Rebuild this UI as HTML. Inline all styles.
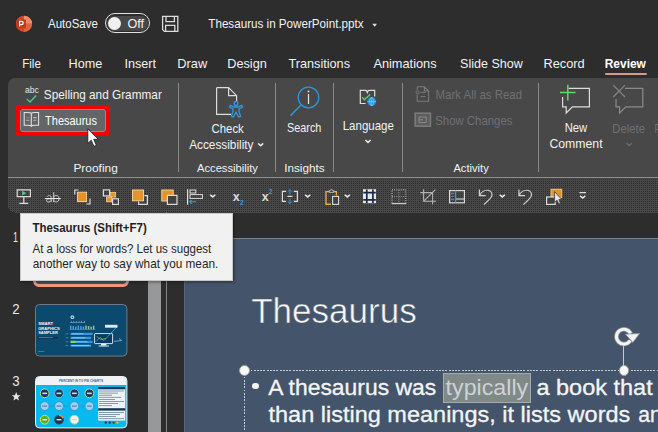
<!DOCTYPE html>
<html><head><meta charset="utf-8">
<style>
*{box-sizing:border-box;margin:0;padding:0}
html,body{width:658px;height:432px;overflow:hidden;background:#2d2d2d;font-family:"Liberation Sans",sans-serif}
.a{position:absolute;display:block}
.tx{overflow:visible}
text{font-family:"Liberation Sans",sans-serif;white-space:pre}
</style></head><body>
<svg class="a" style="left:14px;top:14px;" width="20" height="20" viewBox="0 0 20 20">
 <circle cx="10" cy="9.8" r="8.1" fill="#d24a28"/>
 <path d="M10 1.7 A8.1 8.1 0 0 1 18.1 9.8 L10 9.8Z" fill="#f08a68"/>
 <path d="M10 9.8 L18.1 9.8 A8.1 8.1 0 0 1 10 17.9Z" fill="#e2623c"/>
 <rect x="2.4" y="5.4" width="9.5" height="9.1" rx=".8" fill="#bf3a1a"/>
 <path d="M5.6 12.6 V7.4 H7.6 A1.6 1.6 0 0 1 7.6 10.6 H5.6" fill="none" stroke="#fff" stroke-width="1.25"/></svg>
<svg class="a tx" style="left:0;top:0" width="1" height="1"><text transform="translate(48.00,28.00) scale(0.8844,1)" font-size="13" fill="#f2f2f2" >AutoSave</text></svg>
<div class="a" style="left:104.9px;top:13.4px;width:45px;height:19.6px;background:#2d2d2d;border:1.2px solid #e2e2e2;border-radius:10px"></div>
<div class="a" style="left:107px;top:15.5px;width:40.8px;height:15.4px;background:#484848;border-radius:8px"></div>
<div class="a" style="left:108px;top:16.5px;width:13.4px;height:13.4px;background:#f0f0f0;border-radius:7px"></div>
<svg class="a tx" style="left:0;top:0" width="1" height="1"><text transform="translate(127.40,27.90) scale(1.0041,1)" font-size="12.6" fill="#f2f2f2" >Off</text></svg>
<svg class="a" style="left:161px;top:15px;" width="19" height="18" viewBox="0 0 19 18"><g fill="none" stroke="#dcdcdc" stroke-width="1.3"><path d="M1.6 1.4 H16.8 V16.4 H3.4 L1.6 14.6Z"/><path d="M5 1.4 V6.6 H13.4 V1.4"/><path d="M4.6 16.3 V10.4 H13.8 V16.3"/></g></svg>
<svg class="a tx" style="left:0;top:0" width="1" height="1"><text transform="translate(208.30,28.00) scale(0.8972,1)" font-size="13" fill="#f2f2f2" >Thesaurus in PowerPoint.pptx</text></svg>
<svg class="a" style="left:371px;top:22px;" width="9" height="6" viewBox="0 0 9 6"><path d="M1.3 1.8 L6 1.8 L3.65 4.7Z" fill="#e0e0e0"/></svg>
<svg class="a tx" style="left:0;top:0" width="1" height="1"><text transform="translate(22.20,67.70) scale(0.8935,1)" font-size="13" fill="#f2f2f2" >File</text></svg>
<svg class="a tx" style="left:0;top:0" width="1" height="1"><text transform="translate(68.50,67.70) scale(0.9738,1)" font-size="13" fill="#f2f2f2" >Home</text></svg>
<svg class="a tx" style="left:0;top:0" width="1" height="1"><text transform="translate(124.40,67.70) scale(0.9692,1)" font-size="13" fill="#f2f2f2" >Insert</text></svg>
<svg class="a tx" style="left:0;top:0" width="1" height="1"><text transform="translate(177.30,67.70) scale(0.9895,1)" font-size="13" fill="#f2f2f2" >Draw</text></svg>
<svg class="a tx" style="left:0;top:0" width="1" height="1"><text transform="translate(227.20,67.70) scale(0.9795,1)" font-size="13" fill="#f2f2f2" >Design</text></svg>
<svg class="a tx" style="left:0;top:0" width="1" height="1"><text transform="translate(288.40,67.70) scale(0.9770,1)" font-size="13" fill="#f2f2f2" >Transitions</text></svg>
<svg class="a tx" style="left:0;top:0" width="1" height="1"><text transform="translate(373.40,67.70) scale(0.9837,1)" font-size="13" fill="#f2f2f2" >Animations</text></svg>
<svg class="a tx" style="left:0;top:0" width="1" height="1"><text transform="translate(460.10,67.70) scale(0.9642,1)" font-size="13" fill="#f2f2f2" >Slide Show</text></svg>
<svg class="a tx" style="left:0;top:0" width="1" height="1"><text transform="translate(543.40,67.70) scale(0.9866,1)" font-size="13" fill="#f2f2f2" >Record</text></svg>
<svg class="a tx" style="left:0;top:0" width="1" height="1"><text transform="translate(604.70,67.70) scale(0.9208,1)" font-size="13" fill="#fff" font-weight="bold" >Review</text></svg>
<div class="a" style="left:604.5px;top:73.2px;width:42px;height:2.1px;background:#d99a85;border-radius:1px"></div>
<div class="a" style="left:8px;top:78px;width:660px;height:134px;background:#484848;border-radius:7px 0 0 7px"></div>
<svg class="a" style="left:8px;top:178px" width="650" height="34.5" shape-rendering="crispEdges"><defs><pattern id="dz" width="2" height="2" patternUnits="userSpaceOnUse"><rect width="2" height="2" fill="#484848"/><rect x="1" y="1" width="1" height="1" fill="#2c2c2c"/></pattern></defs><path d="M0 0 H650 V34.5 H7 A7 7 0 0 1 0 27.5Z" fill="url(#dz)"/></svg>
<div class="a" style="left:8px;top:177.2px;width:660px;height:1px;background:#8a8a8a;"></div>
<div class="a" style="left:178px;top:83px;width:1px;height:89px;background:#8a8a8a;"></div>
<div class="a" style="left:275px;top:83px;width:1px;height:89px;background:#8a8a8a;"></div>
<div class="a" style="left:333px;top:83px;width:1px;height:89px;background:#8a8a8a;"></div>
<div class="a" style="left:402px;top:83px;width:1px;height:89px;background:#8a8a8a;"></div>
<div class="a" style="left:538px;top:83px;width:1px;height:89px;background:#8a8a8a;"></div>
<svg class="a tx" style="left:0;top:0" width="1" height="1"><text transform="translate(25.10,92.60) scale(1.0011,1)" font-size="8.5" fill="#e6e6e6" >abc</text></svg>
<svg class="a" style="left:24px;top:93px;" width="16" height="12" viewBox="0 0 16 12"><path d="M2.8 6 L6 9 L12.2 2.4" fill="none" stroke="#49c797" stroke-width="1.4"/></svg>
<svg class="a tx" style="left:0;top:0" width="1" height="1"><text transform="translate(43.80,99.00) scale(0.9085,1)" font-size="13" fill="#f2f2f2" >Spelling and Grammar</text></svg>
<div class="a" style="left:16.2px;top:105px;width:94.2px;height:30.6px;background:transparent;border:4px solid #f40000"></div>
<div class="a" style="left:20.2px;top:109.1px;width:85.6px;height:22.5px;background:#646566;border:1px solid #8c9292;border-radius:3px"></div>
<svg class="a" style="left:23px;top:110px;" width="18" height="18" viewBox="0 0 18 18"><g fill="none" stroke="#e2e2e2" stroke-width="1.05">
<path d="M8.3 3.4 V16.4"/><path d="M8.3 3.4 C7.6 2.6 6.4 2.4 5 2.4 H1.2 V15.2 H5 C6.4 15.2 7.6 15.4 8.3 16.2 C9 15.4 10.2 15.2 11.6 15.2 H15.6 V2.4 H11.6 C10.2 2.4 9 2.6 8.3 3.4Z"/></g>
<path d="M3.2 7.6 H6.6" stroke="#ee5a3a" stroke-width="1.1"/>
<path d="M3.2 10.3 H6.6 M10.2 7.6 H13.6 M10.2 10.3 H13.6" stroke="#b4b8bc" stroke-width="1.1"/></svg>
<svg class="a tx" style="left:0;top:0" width="1" height="1"><text transform="translate(45.10,124.70) scale(0.8458,1)" font-size="13" fill="#fff" >Thesaurus</text></svg>
<svg class="a tx" style="left:0;top:0" width="1" height="1"><text transform="translate(73.40,171.90) scale(1.0458,1)" font-size="11.4" fill="#f2f2f2" >Proofing</text></svg>
<svg class="a" style="left:86.4px;top:126.5px;" width="16" height="22" viewBox="0 0 16 22"><path d="M1.8 1.8 V16.4 L5.2 13.2 L7.9 19.4 L10.4 18.3 L7.7 12.3 H12.4Z" fill="#fff" stroke="#222" stroke-width="0.9"/></svg>
<svg class="a" style="left:214px;top:85px;" width="32" height="34" viewBox="0 0 32 34"><path d="M2.6 2.7 H14.6 L22.6 10.7 V16 M17 29.3 H2.6 V2.7 M14.6 2.7 V10.7 H22.6" fill="none" stroke="#dcdcdc" stroke-width="1.2"/>
<g fill="none" stroke="#2f9be0" stroke-width="1.3"><circle cx="22" cy="18.4" r="1.9"/>
<path d="M16.2 20.3 L20 22 H24 L27.8 20.3 L28.6 22 L25 23.8 V26.5 L26.6 31.3 L24.6 32 L22 27.2 L19.4 32 L17.4 31.3 L19 26.5 V23.8 L15.4 22Z"/></g></svg>
<svg class="a tx" style="left:0;top:0" width="1" height="1"><text transform="translate(211.50,132.60) scale(0.8776,1)" font-size="13" fill="#f2f2f2" >Check</text></svg>
<svg class="a tx" style="left:0;top:0" width="1" height="1"><text transform="translate(189.20,148.80) scale(0.9090,1)" font-size="13" fill="#f2f2f2" >Accessibility</text></svg>
<svg class="a" style="left:256px;top:141px;" width="10" height="7" viewBox="0 0 10 7"><path d="M2.2 2.4 L4.7 4.7 L7.2 2.4" fill="none" stroke="#ededed" stroke-width="1.5"/></svg>
<svg class="a tx" style="left:0;top:0" width="1" height="1"><text transform="translate(197.00,171.90) scale(0.9818,1)" font-size="11.4" fill="#f2f2f2" >Accessibility</text></svg>
<svg class="a" style="left:288px;top:84px;" width="34" height="34" viewBox="0 0 34 34"><circle cx="20.5" cy="13.5" r="10.3" fill="none" stroke="#2b96da" stroke-width="1.3"/>
<path d="M13.2 20.8 L2.5 31.6" stroke="#2b96da" stroke-width="1.5"/>
<path d="M20.5 10 V20" stroke="#e6e6e6" stroke-width="1.2"/><circle cx="20.5" cy="7.4" r=".9" fill="#e6e6e6"/></svg>
<svg class="a tx" style="left:0;top:0" width="1" height="1"><text transform="translate(287.00,131.80) scale(0.8347,1)" font-size="13" fill="#f2f2f2" >Search</text></svg>
<svg class="a tx" style="left:0;top:0" width="1" height="1"><text transform="translate(284.20,171.90) scale(1.0297,1)" font-size="11.4" fill="#f2f2f2" >Insights</text></svg>
<svg class="a" style="left:358px;top:88px;" width="22" height="20" viewBox="0 0 22 20"><path d="M7.6 15.5 H2.3 V2.3 H7.6 C8.8 2.3 9.4 3.4 9.4 5.6 C9.4 3.4 10 2.3 11.2 2.3 H16.7 V8.6" fill="none" stroke="#deded8" stroke-width="1.2"/>
<path d="M4.2 9.3 L6.4 11.7 L12.1 6.4" fill="none" stroke="#5fd06e" stroke-width="1.4"/>
<circle cx="13.7" cy="13.6" r="4.5" fill="#1f8fd8"/><path d="M9.4 13.6 H18 M13.7 9.2 V18 M13.7 9.2 C11 11.4 11 15.8 13.7 18 C16.4 15.8 16.4 11.4 13.7 9.2" fill="none" stroke="#9fd4f6" stroke-width="0.6"/></svg>
<svg class="a tx" style="left:0;top:0" width="1" height="1"><text transform="translate(342.70,130.40) scale(0.8850,1)" font-size="13" fill="#f2f2f2" >Language</text></svg>
<svg class="a" style="left:362.5px;top:138px;" width="10" height="7" viewBox="0 0 10 7"><path d="M2.4 2 L5 4.4 L7.6 2" fill="none" stroke="#ededed" stroke-width="1.5"/></svg>
<svg class="a" style="left:415px;top:85px;" width="16" height="18" viewBox="0 0 16 18"><path d="M2.2 1.8 H9.4 L13.6 6 V16.2 H2.2 V10 M2.2 5 V1.8 M9.4 1.8 V6 H13.6" fill="none" stroke="#7a7a7a" stroke-width="1.1"/>
<circle cx="2.6" cy="7.4" r="1.6" fill="none" stroke="#7a7a7a" stroke-width="1"/><path d="M5.6 7.4 H10.6 M5.6 11.6 H10.6" stroke="#7a7a7a" stroke-width="1"/></svg>
<svg class="a tx" style="left:0;top:0" width="1" height="1"><text transform="translate(435.60,98.80) scale(0.8801,1)" font-size="13" fill="#6c7076" >Mark All as Read</text></svg>
<svg class="a" style="left:414px;top:112px;" width="18" height="16" viewBox="0 0 18 16"><rect x="1.2" y="1.2" width="15.2" height="13" fill="#5c5c5c" stroke="#7a7a7a" stroke-width="1.6"/><path d="M5 5 H12.2 V10.6 H5 Z M5 7.8 H9" fill="none" stroke="#8a8a8a" stroke-width="1"/></svg>
<svg class="a tx" style="left:0;top:0" width="1" height="1"><text transform="translate(435.20,124.80) scale(0.8759,1)" font-size="13" fill="#6c7076" >Show Changes</text></svg>
<svg class="a tx" style="left:0;top:0" width="1" height="1"><text transform="translate(453.40,171.90) scale(0.9796,1)" font-size="11.4" fill="#f2f2f2" >Activity</text></svg>
<svg class="a" style="left:558px;top:83px;" width="36" height="34" viewBox="0 0 36 34"><path d="M10.5 5.4 H31.4 V23.8 H14.4 L8.2 30 V23.8 H4.6 V14" fill="none" stroke="#dcdcdc" stroke-width="1.2"/>
<path d="M2 9.6 H17.6 M9.8 1.8 V17.6" stroke="#5fd86a" stroke-width="1.5"/></svg>
<svg class="a tx" style="left:0;top:0" width="1" height="1"><text transform="translate(564.70,131.80) scale(0.8687,1)" font-size="13" fill="#f2f2f2" >New</text></svg>
<svg class="a tx" style="left:0;top:0" width="1" height="1"><text transform="translate(549.40,147.70) scale(0.9447,1)" font-size="13" fill="#f2f2f2" >Comment</text></svg>
<svg class="a" style="left:611px;top:83px;" width="36" height="34" viewBox="0 0 36 34"><path d="M14 5.4 H31.8 V23.8 H14.8 L8.6 30 V23.8 H5 V16" fill="none" stroke="#8a8a8a" stroke-width="1.2"/>
<path d="M2.2 2.2 L14 14 M14 2.2 L2.2 14" stroke="#858585" stroke-width="1.2"/></svg>
<svg class="a tx" style="left:0;top:0" width="1" height="1"><text transform="translate(612.20,132.90) scale(0.8730,1)" font-size="13" fill="#6c7076" >Delete</text></svg>
<svg class="a" style="left:623.5px;top:141px;" width="10" height="7" viewBox="0 0 10 7"><path d="M2.6 2.2 L5.2 4.5 L7.8 2.2" fill="none" stroke="#686c72" stroke-width="1.4"/></svg>
<svg class="a tx" style="left:0;top:0" width="1" height="1"><text transform="translate(654.60,132.90) scale(0.7348,1)" font-size="13" fill="#6c7076" >P</text></svg>
<svg class="a" style="left:0;top:180px" width="658" height="32" viewBox="0 180 658 32"><path d="M17.2 189.8 H30.4 V196.6 H17.2Z M23.8 196.6 V203.4 M19.4 203.4 H28.2" fill="none" stroke="#dcdcdc" stroke-width="1.2"/><path d="M22.2 190.8 L26.2 193.2 L22.2 195.6Z" fill="#4fd08f"/><path d="M47 196.7 C48 195.2 51.2 195 51.2 197.6 V202.1 M51.2 198.6 C48 198.6 46.5 199.2 46.5 200.5 C46.5 202.6 50 202.6 51.2 200.4 M53.7 192.2 V202.1 M53.7 197 C54.7 194.8 59 194.8 59 198.7 C59 202.8 54.7 202.6 53.7 200.4" fill="none" stroke="#cdcdcd" stroke-width="1"/><path d="M44.9 198.6 H60.8" stroke="#f0f0f0" stroke-width="1"/><rect x="77.6" y="192.2" width="9" height="9.4" fill="#e3932b" stroke="#f6d28f" stroke-width="1"/><path d="M78.4 190 H74.8 V194.6 M86.4 204 H90 V198.6" fill="none" stroke="#dcdcdc" stroke-width="1.2"/><rect x="103.4" y="189.9" width="6.2" height="6" fill="none" stroke="#dcdcdc" stroke-width="1.2"/><rect x="110.2" y="192.3" width="5.4" height="4.8" fill="#e3932b" stroke="#f6d28f" stroke-width=".8"/><rect x="106.6" y="197" width="5" height="4.8" fill="#e3932b" stroke="#f6d28f" stroke-width=".8"/><rect x="112.6" y="198.8" width="5.8" height="5.6" fill="none" stroke="#dcdcdc" stroke-width="1.2"/><path d="M144.4 195.6 H147.4 V204.4 H138.6 V201.6" fill="none" stroke="#dcdcdc" stroke-width="1.2"/><rect x="132.5" y="190" width="11" height="10.8" fill="#e3932b" stroke="#f6d28f" stroke-width="1"/><rect x="161.8" y="190" width="11.4" height="11" fill="#e3932b" stroke="#f6d28f" stroke-width="1"/><rect x="167.4" y="195.4" width="9.6" height="9" fill="#414141" stroke="#dcdcdc" stroke-width="1.2"/><path d="M187.6 189.2 V204.8" stroke="#dcdcdc" stroke-width="1.2"/><rect x="190" y="190" width="5.8" height="3" fill="none" stroke="#dcdcdc" stroke-width="1"/><rect x="190" y="194.6" width="12.4" height="3.8" fill="none" stroke="#dcdcdc" stroke-width="1"/><path d="M189.6 201.8 H196 M191.8 199.8 L189.6 201.8 L191.8 203.8" fill="none" stroke="#2f9be0" stroke-width="1.1"/><path d="M210.10000000000002 194.7 L212.70000000000002 196.89999999999998 L215.3 194.7" fill="none" stroke="#ededed" stroke-width="1.5"/><text x="232.8" y="201" font-size="12.5" font-weight="bold" fill="#dcdcdc" font-family="Liberation Sans">x</text><text x="240" y="204.7" font-size="6.6" font-weight="bold" fill="#2f9be0" font-family="Liberation Sans">2</text><text x="261.8" y="201" font-size="12.5" font-weight="bold" fill="#dcdcdc" font-family="Liberation Sans">x</text><text x="268.8" y="194.3" font-size="6.6" font-weight="bold" fill="#2f9be0" font-family="Liberation Sans">2</text><path d="M286 191.4 H282.4 V201.4 H286 M293.8 191.4 H297.4 V201.4 H293.8 M287.4 196.4 H292.4" fill="none" stroke="#dcdcdc" stroke-width="1.2"/><path d="M289.9 194.4 V189.8 M288 191.6 L289.9 189.6 L291.8 191.6 M289.9 198.6 V203.4 M288 201.6 L289.9 203.6 L291.8 201.6" fill="none" stroke="#2f9be0" stroke-width="1"/><path d="M305.1 194.7 L307.7 196.89999999999998 L310.3 194.7" fill="none" stroke="#ededed" stroke-width="1.5"/><path d="M329.4 191.6 H326 V204.2 H331 M333.6 191.6 H336.4 V195.4" fill="none" stroke="#f0a93a" stroke-width="1.4"/><path d="M329.2 192.4 V190.6 H330.4 C330.4 189 332.6 189 332.6 190.6 H333.8 V192.4Z" fill="none" stroke="#bdbdbd" stroke-width=".9"/><rect x="332.6" y="196.4" width="6" height="8" fill="#414141" stroke="#dcdcdc" stroke-width="1.1"/><path d="M344.7 194.7 L347.29999999999995 196.89999999999998 L349.9 194.7" fill="none" stroke="#ededed" stroke-width="1.5"/><rect x="363" y="189.2" width="13" height="14" fill="#e9e9e9"/><path d="M366.8 189.4 V203 M372.9 189.4 V203 M363.2 192.6 H375.8 M363.2 199.9 H375.8" stroke="#17294f" stroke-width="1.7"/><rect x="392" y="189.8" width="13.8" height="13.6" fill="none" stroke="#bdbdbd" stroke-width="1" stroke-dasharray="1 1.2"/><path d="M398.9 190 V203 M392 196.6 H405.8" stroke="#9a9a9a" stroke-width="1" stroke-dasharray="1 1.2"/><path d="M391.6 203.6 H406.2" stroke="#cfcfcf" stroke-width="1.1"/><path d="M423.6 189.2 V201.2 H436 M420.4 192.6 H432.6 V204.6 M424 200.8 L435.4 189.6" fill="none" stroke="#b4b4b4" stroke-width="1.05"/><rect x="449.6" y="190.6" width="14.8" height="12.2" fill="none" stroke="#dcdcdc" stroke-width="1.2"/><path d="M455.6 199 H464.4" stroke="#dcdcdc" stroke-width="1.1"/><path d="M455.6 190.6 V202.8" stroke="#2f9be0" stroke-width="1.2"/><path d="M451 193.4 H454 M451 196.4 H454 M451 199.4 H454" stroke="#2f9be0" stroke-width="1"/><path d="M479.40000000000003 189.4 V195.6 H485.6 M479.6 195.4 C482.8 188.6 492.2 188.6 492.0 195 C492.0 197.4 489.8 199.4 483.8 204.6" fill="none" stroke="#cfcfcf" stroke-width="1.2"/><path d="M499.7 194.7 L502.29999999999995 196.89999999999998 L504.9 194.7" fill="none" stroke="#ededed" stroke-width="1.5"/><path d="M518.9 189.4 V195.6 H525.0999999999999 M519.0999999999999 195.4 C522.3 188.6 531.6999999999999 188.6 531.5 195 C531.5 197.4 529.3 199.4 523.3 204.6" fill="none" stroke="#cfcfcf" stroke-width="1.2"/><rect x="551" y="189.2" width="10.8" height="8.4" fill="#e3932b" stroke="#f6d28f" stroke-width=".8"/><rect x="546.6" y="197" width="8.6" height="7.4" fill="#414141" stroke="#dcdcdc" stroke-width="1.2"/><path d="M554.6 191.6 V202.4 L557 200.2 L558.8 204 L560.4 203.2 L558.8 199.6 H561.8Z" fill="#e8e8e8" stroke="#3a3a3a" stroke-width=".8"/><path d="M579.4 192.6 H586" stroke="#dcdcdc" stroke-width="1.3"/><path d="M580.0999999999999 195.8 L582.6999999999999 198.0 L585.3 195.8" fill="none" stroke="#ededed" stroke-width="1.5"/></svg>
<div class="a" style="left:148px;top:238px;width:13.1px;height:200px;background:#97989a;"></div>
<div class="a" style="left:165.9px;top:212px;width:1.2px;height:230px;background:#858585;"></div>
<svg class="a tx" style="left:0;top:0" width="1" height="1"><text transform="translate(12.90,241.80) scale(0.5952,1)" font-size="15" fill="#ececec" >1</text></svg>
<svg class="a tx" style="left:0;top:0" width="1" height="1"><text transform="translate(12.30,314.10) scale(0.8525,1)" font-size="15.5" fill="#e6e6e6" >2</text></svg>
<svg class="a tx" style="left:0;top:0" width="1" height="1"><text transform="translate(12.30,385.60) scale(0.8525,1)" font-size="15.5" fill="#e6e6e6" >3</text></svg>
<svg class="a" style="left:10px;top:390px;" width="12" height="12" viewBox="0 0 12 12"><path d="M6.2 2 L7.4 5.2 L10.6 5.3 L8.1 7.3 L9 10.6 L6.2 8.7 L3.4 10.6 L4.3 7.3 L1.8 5.3 L5 5.2Z" fill="#e6e6e6"/></svg>
<div class="a" style="left:32.7px;top:230px;width:96.6px;height:56.9px;background:#44546a;border:3px solid #f0977a;border-radius:6px"></div>
<svg class="a" style="left:35px;top:303.5px;" width="93" height="53" viewBox="0 0 93 53"><rect x="0.5" y="0.5" width="91.4" height="51.6" rx="4" fill="#0b4a6e" stroke="#6d7b86" stroke-width="1"/><g font-family="Liberation Sans" font-weight="bold" font-size="4.1" fill="#f4f8fb"><text x="3.2" y="21" textLength="15" lengthAdjust="spacingAndGlyphs">SMART</text><text x="3.2" y="25.7" textLength="21.6" lengthAdjust="spacingAndGlyphs">GRAPHICS</text><text x="3.2" y="30.4" textLength="19.6" lengthAdjust="spacingAndGlyphs">SAMPLER</text></g><rect x="3.2" y="32.8" width="19.8" height="1.7" fill="#0a2f52"/><rect x="4" y="33.4" width="14" height=".5" fill="#b9cfe0" opacity=".8"/><rect x="3.2" y="47.4" width="6" height=".6" fill="#6f9ab5"/><circle cx="37.4" cy="13.2" r="1.9" fill="#b7d8ee"/><circle cx="37.4" cy="13.2" r=".8" fill="#0b4a6e"/><rect x="35" y="18.2" width="15" height=".5" fill="#9fc4dc"/><rect x="36.0" y="16.8" width=".5" height="1.6" fill="#9fc4dc"/><rect x="38.6" y="16.8" width=".5" height="1.6" fill="#9fc4dc"/><rect x="41.2" y="16.8" width=".5" height="1.6" fill="#9fc4dc"/><rect x="43.8" y="16.8" width=".5" height="1.6" fill="#9fc4dc"/><rect x="46.4" y="16.8" width=".5" height="1.6" fill="#9fc4dc"/><rect x="49.0" y="16.8" width=".5" height="1.6" fill="#9fc4dc"/><rect x="35.0" y="21.6" width="1.4" height="3.8" fill="#3fa5ea"/><rect x="37.55" y="22.1" width="1.4" height="3.3" fill="#3fa5ea"/><rect x="40.1" y="22.6" width="1.4" height="2.8" fill="#3fa5ea"/><rect x="42.65" y="21.6" width="1.4" height="3.8" fill="#3fa5ea"/><rect x="45.2" y="22.1" width="1.4" height="3.3" fill="#3fa5ea"/><rect x="47.75" y="22.6" width="1.4" height="2.8" fill="#3fa5ea"/><rect x="50.3" y="21.6" width="1.4" height="3.8" fill="#8fc7a0"/><rect x="52.849999999999994" y="22.1" width="1.4" height="3.3" fill="#8fc7a0"/><rect x="55.4" y="22.6" width="1.4" height="2.8" fill="#8fc7a0"/><rect x="57.95" y="21.6" width="1.4" height="3.8" fill="#8fc7a0"/><rect x="34.6" y="25.4" width="26" height=".5" fill="#9fc4dc" opacity=".7"/><rect x="35.6" y="28.8" width="22.0" height="2.2" fill="#2f97e6"/><rect x="36.4" y="29.6" width="12" height=".6" fill="#d6ecfa" opacity=".9"/><rect x="30.6" y="29.6" width="2.6" height=".6" fill="#9fc4dc" opacity=".7"/><rect x="35.6" y="32.8" width="20.5" height="2.2" fill="#2f97e6"/><rect x="36.4" y="33.599999999999994" width="14" height=".6" fill="#d6ecfa" opacity=".9"/><rect x="30.6" y="33.599999999999994" width="2.6" height=".6" fill="#9fc4dc" opacity=".7"/><rect x="35.6" y="36.8" width="22.0" height="2.2" fill="#2f97e6"/><rect x="36.4" y="37.599999999999994" width="16" height=".6" fill="#d6ecfa" opacity=".9"/><rect x="30.6" y="37.599999999999994" width="2.6" height=".6" fill="#9fc4dc" opacity=".7"/><rect x="35.6" y="40.6" width="20.5" height="2.2" fill="#2f97e6"/><rect x="36.4" y="41.4" width="18" height=".6" fill="#d6ecfa" opacity=".9"/><rect x="30.6" y="41.4" width="2.6" height=".6" fill="#9fc4dc" opacity=".7"/><rect x="35.6" y="36.8" width="5" height="2.2" fill="#9ccc50"/><rect x="59.6" y="29.6" width="18" height="10" rx=".6" fill="#0a3b5c" stroke="#e6f2fa" stroke-width=".9"/><rect x="66" y="39.8" width="5.4" height="1.8" fill="#e6f2fa"/><rect x="63.6" y="41.6" width="10.4" height=".9" fill="#e6f2fa"/><path d="M61 37.6 L65 33.4 L69 36.6 L73 32.4 L83 21.6" stroke="#3fb0f0" stroke-width=".8" fill="none"/><path d="M61.6 32.4 L66 35.6 L71 34.2" stroke="#9ccc50" stroke-width=".6" fill="none"/><rect x="70" y="20.8" width="12.4" height="2.9" fill="#d5eafa"/><path d="M79 37.4 L86.4 36.6 M84 34.6 L86.6 36.6" stroke="#b8d6e8" stroke-width=".6" fill="none"/></svg>
<svg class="a" style="left:35px;top:375.8px;" width="93" height="53" viewBox="0 0 93 53"><rect x="0.5" y="0.5" width="91.4" height="51.4" rx="4" fill="#06baf1" stroke="#eef2f5" stroke-width="1"/><path d="M1 9 V4.2 A3.4 3.4 0 0 1 4.4 1 H88 A3.4 3.4 0 0 1 91.4 4.2 V9Z" fill="#f1f2f4"/><text x="24" y="6.4" font-family="Liberation Sans" font-weight="bold" font-size="3.6" fill="#2a6cb0" textLength="44" lengthAdjust="spacingAndGlyphs">PERCENT IN TO PIE CHARTS</text><circle cx="9.7" cy="17.3" r="4.4" fill="#1a395a" stroke="#c9d98c" stroke-width="1"/><rect x="7.299999999999999" y="16.6" width="4.8" height="1.5" fill="#e8eef4" opacity=".9"/><circle cx="24" cy="17.3" r="4.4" fill="#1a395a" stroke="#8fb8c8" stroke-width="1"/><rect x="21.6" y="16.6" width="4.8" height="1.5" fill="#e8eef4" opacity=".9"/><circle cx="39.4" cy="17.3" r="4.4" fill="#1a395a" stroke="#8fb8c8" stroke-width="1"/><rect x="37.0" y="16.6" width="4.8" height="1.5" fill="#e8eef4" opacity=".9"/><circle cx="54.4" cy="17.3" r="4.4" fill="#1a395a" stroke="#c9d98c" stroke-width="1"/><rect x="52.0" y="16.6" width="4.8" height="1.5" fill="#e8eef4" opacity=".9"/><circle cx="9.7" cy="30.1" r="4.4" fill="#9dd2f2" stroke="#3f8fc8" stroke-width=".9"/><rect x="7.299999999999999" y="29.4" width="4.8" height="1.4" fill="#3f7fb4" opacity=".8"/><circle cx="24" cy="30.1" r="4.4" fill="#9dd2f2" stroke="#3f8fc8" stroke-width=".9"/><rect x="21.6" y="29.4" width="4.8" height="1.4" fill="#3f7fb4" opacity=".8"/><circle cx="39.4" cy="30.1" r="4.4" fill="#9dd2f2" stroke="#3f8fc8" stroke-width=".9"/><rect x="37.0" y="29.4" width="4.8" height="1.4" fill="#3f7fb4" opacity=".8"/><circle cx="54.4" cy="30.1" r="4.4" fill="#9dd2f2" stroke="#3f8fc8" stroke-width=".9"/><rect x="52.0" y="29.4" width="4.8" height="1.4" fill="#3f7fb4" opacity=".8"/><path d="M14.6 30.1 H19 M29 30.1 H34.4 M44.4 30.1 H49.4 M59.2 17.3 H61" stroke="#2f7fb8" stroke-width=".5"/><circle cx="9.7" cy="43.7" r="4.4" fill="#55b030" stroke="#d8e060" stroke-width="1"/><rect x="7.4" y="43" width="4.6" height="1.4" fill="#f0f6d0"/><circle cx="24" cy="43.7" r="4.4" fill="#1d3450" stroke="#2b4a6a" stroke-width="1"/><path d="M24 39.3 A4.4 4.4 0 0 1 28.2 42.4" fill="none" stroke="#f09020" stroke-width="1.4"/><rect x="21.6" y="43" width="4.8" height="1.4" fill="#e8eef4"/><circle cx="39.4" cy="43.7" r="4.4" fill="#f3f4ec" stroke="#a8d8a0" stroke-width="1"/><rect x="37" y="43" width="4.8" height="1.2" fill="#e0d8a8"/><rect x="63.2" y="11" width="27" height="33.6" fill="#eef3f7"/><rect x="63.2" y="11" width="27" height="2.3" fill="#17365a"/><rect x="63.2" y="32.2" width="27" height="2.4" fill="#17365a"/><rect x="64" y="14.6" width="25" height=".8" fill="#4f6f88" opacity=".85"/><rect x="64" y="16.7" width="19" height=".8" fill="#4f6f88" opacity=".85"/><rect x="64" y="18.8" width="13" height=".8" fill="#4f6f88" opacity=".85"/><rect x="64" y="20.9" width="22" height=".8" fill="#4f6f88" opacity=".85"/><rect x="64" y="23.0" width="16" height=".8" fill="#4f6f88" opacity=".85"/><rect x="64" y="25.1" width="25" height=".8" fill="#4f6f88" opacity=".85"/><rect x="64" y="27.200000000000003" width="19" height=".8" fill="#4f6f88" opacity=".85"/><rect x="64" y="29.3" width="13" height=".8" fill="#4f6f88" opacity=".85"/><rect x="64" y="36.0" width="25" height=".8" fill="#4f6f88" opacity=".85"/><rect x="64" y="38.1" width="21" height=".8" fill="#4f6f88" opacity=".85"/><rect x="64" y="40.2" width="17" height=".8" fill="#4f6f88" opacity=".85"/><rect x="64" y="42.3" width="25" height=".8" fill="#4f6f88" opacity=".85"/><circle cx="70.8" cy="46.6" r="1.2" fill="#17365a"/><circle cx="74.8" cy="46.6" r="1.2" fill="#17365a"/><circle cx="78.6" cy="46.6" r="1.2" fill="#2b5a30"/><circle cx="82.4" cy="46.6" r="1.2" fill="#e8c020"/></svg>
<div class="a" style="left:183.6px;top:238.4px;width:480px;height:200px;background:#44546a;border-top:1px solid #76828f;border-left:1px solid #5a6675"></div>
<svg class="a tx" style="left:0;top:0" width="1" height="1"><text transform="translate(251.20,323.10) scale(1.0070,1)" font-size="34.8" fill="#f6f7f9" stroke="#44546a" stroke-width="0.5">Thesaurus</text></svg>
<div class="a" style="left:244.4px;top:370px;width:420px;height:1px;background:repeating-linear-gradient(90deg,#c6cbd1 0 1.9px,transparent 1.9px 3.25px);"></div>
<div class="a" style="left:244px;top:370px;width:1px;height:70px;background:repeating-linear-gradient(180deg,#c6cbd1 0 1.9px,transparent 1.9px 3.25px);"></div>
<div class="a" style="left:239.2px;top:365.2px;width:10.6px;height:10.6px;background:#fafafa;border:1.4px solid #9c9c9c;border-radius:6px"></div>
<div class="a" style="left:618.7px;top:365.2px;width:10.6px;height:10.6px;background:#fafafa;border:1.4px solid #9c9c9c;border-radius:6px"></div>
<div class="a" style="left:623.2px;top:346px;width:1.2px;height:20px;background:#c9c9c9;"></div>
<svg class="a" style="left:612px;top:324px;" width="30" height="26" viewBox="0 0 30 26"><path d="M18.6 9.6 A7.4 7.4 0 1 0 18.2 16.4" fill="none" stroke="#8f959c" stroke-width="4.6"/><path d="M18.6 9.6 A7.4 7.4 0 1 0 18.2 16.4" fill="none" stroke="#f4f4f4" stroke-width="3"/><path d="M13.4 10.2 L27.6 9.6 L20.8 18.4Z" fill="#f4f4f4" stroke="#8f959c" stroke-width=".8"/></svg>
<div class="a" style="left:251.9px;top:382.7px;width:7px;height:6.8px;background:#f5f5f5;border-radius:3.5px"></div>
<div class="a" style="left:442.8px;top:372.8px;width:88.4px;height:30.4px;background:#7f8988;border:1px solid #a3abab"></div>
<svg class="a tx" style="left:0;top:0" width="1" height="1"><text transform="translate(268.20,394.80) scale(1.0752,1)" font-size="21.3" fill="#f3f4f6" stroke="#f3f4f6" stroke-width="0.3">A thesaurus was</text></svg>
<svg class="a tx" style="left:0;top:0" width="1" height="1"><text transform="translate(445.60,394.80) scale(1.0906,1)" font-size="21.3" fill="#cdd2d6" >typically</text></svg>
<svg class="a tx" style="left:0;top:0" width="1" height="1"><text transform="translate(536.40,394.80) scale(1.1040,1)" font-size="21.3" fill="#f3f4f6" stroke="#f3f4f6" stroke-width="0.3">a book that</text></svg>
<svg class="a tx" style="left:0;top:0" width="1" height="1"><text transform="translate(268.50,421.80) scale(1.1037,1)" font-size="21.3" fill="#f3f4f6" stroke="#f3f4f6" stroke-width="0.3">than listing meanings, it lists words</text></svg>
<svg class="a tx" style="left:0;top:0" width="1" height="1"><text transform="translate(638.20,421.80) scale(0.9897,1)" font-size="21.3" fill="#f3f4f6" stroke="#f3f4f6" stroke-width="0.3">an</text></svg>
<div class="a" style="left:20.4px;top:213.2px;width:213px;height:68.2px;background:#f1f1f1;border:1px solid #c8c8c8;box-shadow:1px 1px 3px rgba(0,0,0,.45)"></div>
<svg class="a tx" style="left:0;top:0" width="1" height="1"><text transform="translate(32.40,232.00) scale(0.8964,1)" font-size="12.8" fill="#1e1e1e" font-weight="bold" >Thesaurus (Shift+F7)</text></svg>
<svg class="a tx" style="left:0;top:0" width="1" height="1"><text transform="translate(32.50,253.00) scale(0.8982,1)" font-size="12.8" fill="#262626" >At a loss for words? Let us suggest</text></svg>
<svg class="a tx" style="left:0;top:0" width="1" height="1"><text transform="translate(32.80,268.40) scale(0.9228,1)" font-size="12.8" fill="#262626" >another way to say what you mean.</text></svg>
</body></html>
